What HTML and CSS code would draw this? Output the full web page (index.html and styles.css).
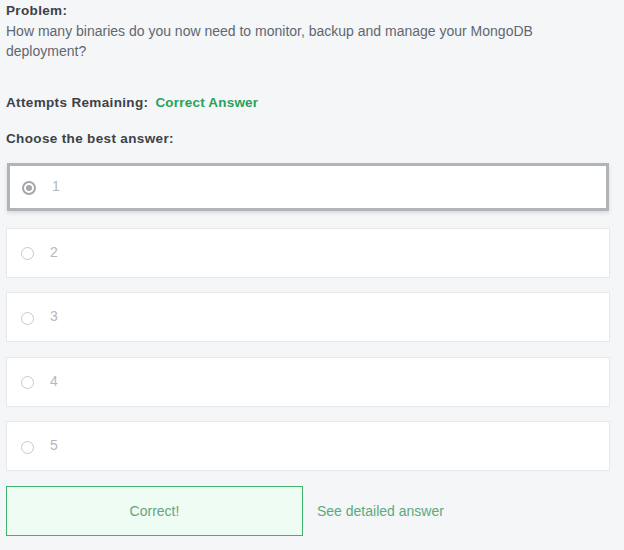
FILE: index.html
```html
<!DOCTYPE html>
<html>
<head>
<meta charset="utf-8">
<link rel="stylesheet" href="styles.css">
</head>
<body>
<div class="page">
  <div class="problem">
    <div class="label">Problem:</div>
    <div class="question">How many binaries do you now need to monitor, backup and manage your MongoDB deployment?</div>
  </div>
  <div class="attempts"><span class="label">Attempts Remaining:</span><span class="status">Correct Answer</span></div>
  <div class="choose label">Choose the best answer:</div>
  <div class="options">
    <div class="option selected"><span class="radio on"></span><span class="num">1</span></div>
    <div class="option"><span class="radio"></span><span class="num">2</span></div>
    <div class="option"><span class="radio"></span><span class="num">3</span></div>
    <div class="option"><span class="radio"></span><span class="num">4</span></div>
    <div class="option"><span class="radio"></span><span class="num">5</span></div>
  </div>
  <div class="actions">
    <div class="correct">Correct!</div>
    <a class="detail">See detailed answer</a>
  </div>
</div>
</body>
</html>
```
FILE: styles.css
```css
html, body {
  margin: 0;
  padding: 0;
  background: #f5f6f8;
}
.page {
  font-family: "Liberation Sans", Arial, sans-serif;
  font-size: 14px;
  line-height: 20px;
  color: #5d6670;
  padding: 1px 14px 0 6px;
}
.label {
  font-weight: bold;
  color: #3d4247;
  font-size: 13.5px;
  letter-spacing: 0.35px;
}
.question {
  color: #5f6770;
}
.attempts {
  margin-top: 32px;
  display: flex;
  gap: 7px;
}
.status {
  color: #2aa15a;
  font-weight: bold;
  font-size: 13.5px;
  letter-spacing: 0.2px;
}
.choose {
  margin-top: 16px;
}
.options {
  margin-top: 14px;
  display: flex;
  flex-direction: column;
  gap: 14.5px;
}
.option {
  background: #fff;
  border: 1px solid #e6e8eb;
  display: flex;
  align-items: center;
  padding-left: 14px;
  box-sizing: border-box;
  height: 50px;
}
.option.selected {
  border: 3px solid #b1b4b8;
  margin: 0 1px 2px 1px;
  box-shadow: 0 2px 4px rgba(0,0,0,0.12);
  padding-left: 12px;
  height: 48px;
}
.radio {
  width: 11px;
  height: 11px;
  border: 1px solid #c6c9cc;
  border-radius: 50%;
  box-sizing: content-box;
  position: relative;
  margin-top: 2px;
}
.radio.on {
  width: 10px;
  height: 10px;
  border: 2px solid #a3a7ab;
}
.radio.on::after {
  content: "";
  position: absolute;
  left: 2px;
  top: 2px;
  width: 6px;
  height: 6px;
  border-radius: 50%;
  background: #a3a7ab;
}
.num {
  margin-left: 16px;
  color: #b4b8bc;
  margin-top: -2px;
}
.actions {
  margin-top: 15px;
  display: flex;
  align-items: center;
  gap: 14px;
}
.correct {
  width: 297px;
  height: 50px;
  box-sizing: border-box;
  border: 1px solid #3eb26f;
  background: #effcf3;
  color: #66a380;
  display: flex;
  align-items: center;
  justify-content: center;
}
.detail {
  color: #5aaa7b;
}
```
